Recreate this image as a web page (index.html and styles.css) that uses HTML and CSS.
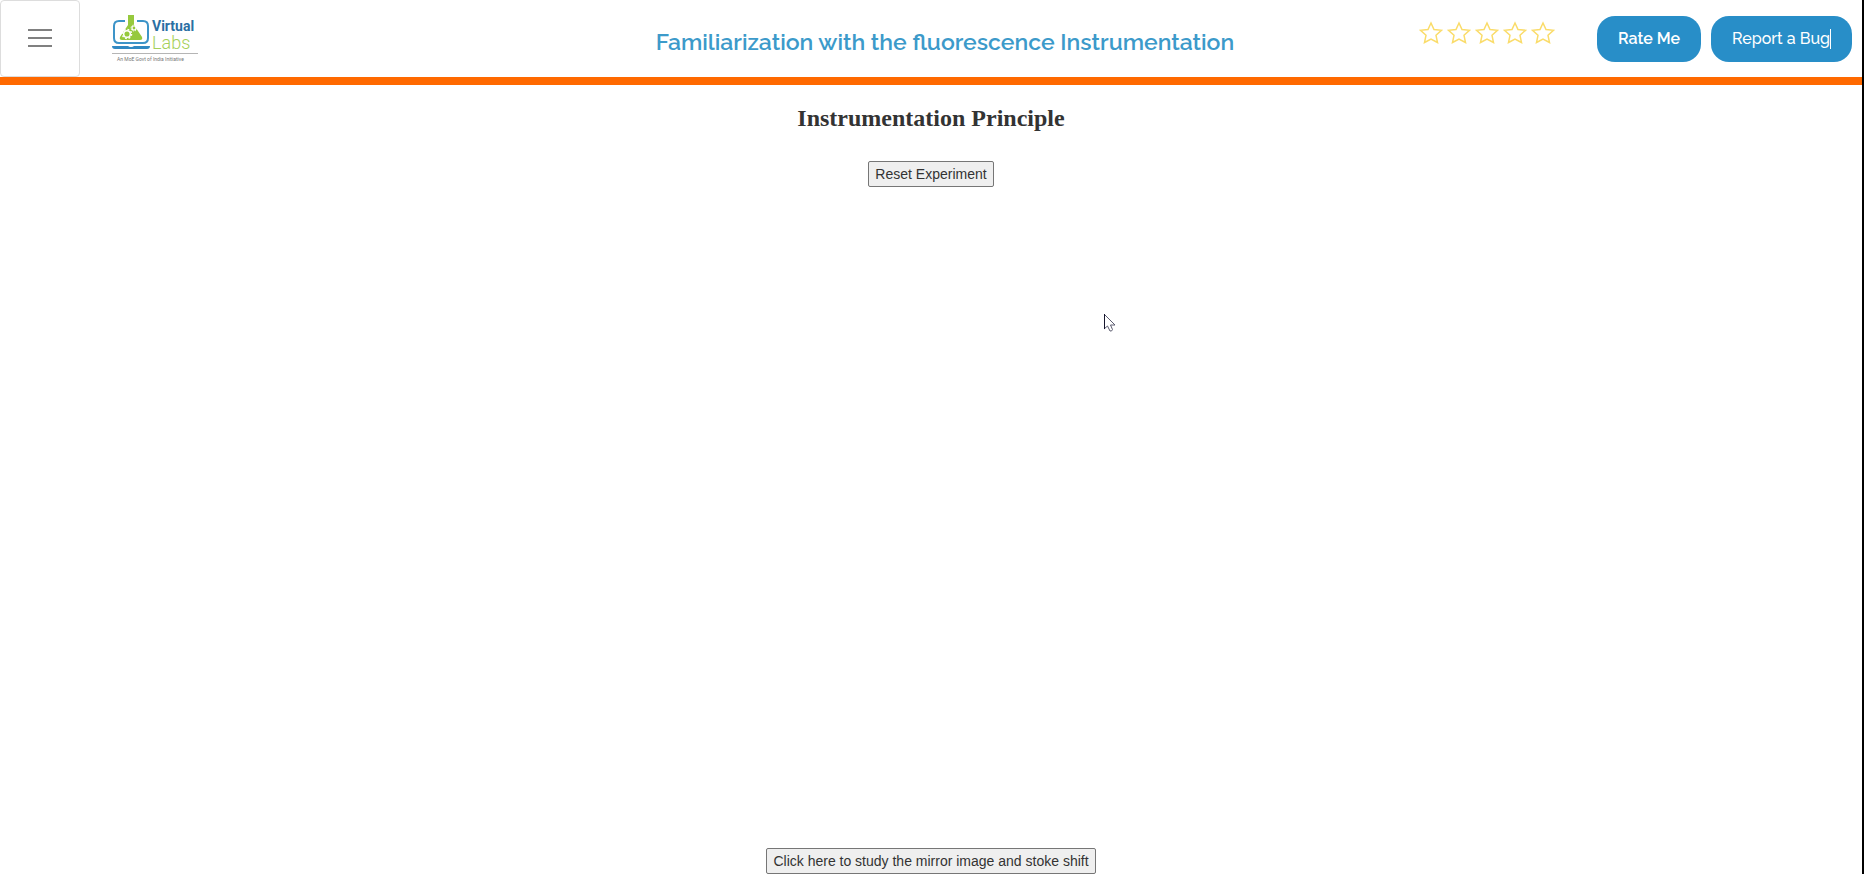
FILE: index.html
```
<!DOCTYPE html>
<html lang="en">
<head>
<meta charset="utf-8">
<title>Virtual Labs</title>
<link rel="stylesheet" href="styles.css">
</head>
<body>
<header class="header">
  <div class="brand">
    <button class="menu" type="button" aria-label="Menu">
      <svg width="24" height="18" viewBox="0 0 24 18" fill="#808080"><path d="M0 0h24v2H0zM0 8h24v2H0zM0 16h24v2H0z"/></svg>
    </button>
    <a class="logo" href="#" aria-label="Virtual Labs">
      <svg width="88" height="48" viewBox="0 0 88 48">
        <path d="M13 6H7Q2 6 2 11v12q0 5 5 5h24q5 0 5-5V11q0-5-5-5h-6" fill="none" stroke="#3d94c8" stroke-width="2"/>
        <path d="M0 31h16q1 1 3 1t3-1h16q0 3-3 3H3q-3 0-3-3z" fill="#3088c2"/>
        <path d="M16 0h6v10l8 12q1 3-2 3H10q-3 0-2-3l8-12z" fill="#96c93d"/>
        <circle cx="15" cy="19" r="3.300" fill="none" stroke="#fff" stroke-width="1.500"/>
        <circle cx="15" cy="19" r="4.600" fill="none" stroke="#fff" stroke-width="1.400" stroke-dasharray="1.800 1.800"/>
        <circle cx="22" cy="13" r="2" fill="none" stroke="#fff" stroke-width="1.200"/>
        <circle cx="22" cy="13" r="3" fill="none" stroke="#fff" stroke-width="1" stroke-dasharray="1.200 1.200"/>
        <text class="logo-virtual" x="40" y="16">Virtual</text>
        <text class="logo-labs" x="40" y="34">Labs</text>
        <path d="M0 38.500h86" stroke="#b5b5b5"/>
        <text class="logo-note" x="5" y="46">An MoE Govt of India Initiative</text>
      </svg>
    </a>
  </div>
  <h1 class="title">Familiarization with the fluorescence Instrumentation</h1>
  <div class="stars" role="img" aria-label="Rating">
    <svg class="star" viewBox="0 0 24 24"><use href="#star"/></svg>
    <svg class="star" viewBox="0 0 24 24"><use href="#star"/></svg>
    <svg class="star" viewBox="0 0 24 24"><use href="#star"/></svg>
    <svg class="star" viewBox="0 0 24 24"><use href="#star"/></svg>
    <svg class="star" viewBox="0 0 24 24"><path id="star" d="M12 2l3 6.500 7.500.8-5.500 5 1.500 7.200-6.500-3.500-6.500 3.500L7 14.300l-5.500-5L9 8.500z"/></svg>
  </div>
  <div class="actions">
    <button class="pill pill-strong" type="button">Rate Me</button>
    <button class="pill pill-caret" type="button">Report a Bug</button>
  </div>
</header>
<main class="main">
  <h2 class="heading">Instrumentation Principle</h2>
  <button class="plain" type="button">Reset Experiment</button>
  <button class="plain plain-last" type="button">Click here to study the mirror image and stoke shift</button>
</main>
<svg class="cursor" width="14" height="20" viewBox="0 0 14 20" aria-hidden="true"><path d="M1 1v15l3.500-3 2.500 5q2 .5 2.500-1.500L7.500 12H12z" fill="#fff"/><path d="M1 1l11 11H7.500l2 4.500Q9 18.500 7 18l-2.500-5L1 16" fill="none" stroke="#5c5c70"/><path d="M1.500 1v15" stroke="#15152c"/></svg>
</body>
</html>
```
FILE: styles.css
```
* { box-sizing: border-box; }
body {
  margin: 0;
  min-height: 100vh;
  display: flex;
  flex-direction: column;
  border-right: 2px solid #000;
  background: #fff;
  font-family: "Liberation Sans", Arial, sans-serif;
}
.header {
  display: flex;
  align-items: center;
  padding-right: 10px;
  border-bottom: 8px solid #ff6900;
}
.brand {
  flex: 0 0 25%;
  display: flex;
  align-items: center;
  gap: 32px;
}
.menu {
  display: flex;
  align-items: center;
  justify-content: center;
  width: 80px;
  height: 77px;
  padding: 0 0 2px;
  border: 1px solid #ddd;
  border-radius: 4px;
  background: #fff;
}
.logo svg { display: block; }
.logo-virtual { font: bold 14px Roboto, sans-serif; fill: #2b6fa3; }
.logo-labs { font: 300 18px Roboto, sans-serif; fill: #a5d05a; }
.logo-note { font: 5px Roboto, sans-serif; fill: #777; }
.title {
  flex: 1;
  margin: 0;
  padding: 6px 0 0 8px;
  text-align: center;
  white-space: nowrap;
  font: 600 23px Raleway, sans-serif;
  color: #3c9aca;
}
.stars {
  display: flex;
  gap: 4px;
  padding-bottom: 12px;
  margin-right: 42px;
}
.star {
  width: 24px;
  height: 24px;
  fill: none;
  stroke: #fadc6a;
  stroke-width: 1.5;
}
.actions { display: flex; gap: 10px; }
.pill {
  display: flex;
  align-items: center;
  height: 46px;
  padding: 0 21px;
  border: 0;
  border-radius: 18px;
  background: #288ec8;
  color: #fff;
  font: 500 16px Raleway, sans-serif;
}
.pill-strong { font-weight: 600; }
.pill-caret::after {
  content: "";
  width: 1px;
  height: 20px;
  background: #fff;
}
.main {
  flex: 1;
  display: flex;
  flex-direction: column;
  align-items: center;
}
.heading {
  margin: 19px 0 29px;
  font: bold 24px/28px "Liberation Serif", "Times New Roman", serif;
  color: #333;
}
.plain {
  height: 26px;
  padding: 0 6px;
  border: 1px solid #767676;
  border-radius: 2px;
  background: #efefef;
  color: #333;
  font: 14px "Liberation Sans", Arial, sans-serif;
}
.plain-last { margin-top: auto; }
.cursor { position: absolute; left: 1103px; top: 313px; }
```
